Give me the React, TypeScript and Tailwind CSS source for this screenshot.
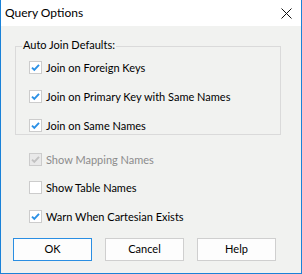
import React from "react";

function Check({ checked, disabled }: { checked: boolean; disabled?: boolean }) {
  return (
    <span
      className={
        "flex h-[13px] w-[13px] shrink-0 items-center justify-center border " +
        (disabled ? "border-[#cccccc] bg-[#e9e9e9]" : "border-[#cccccc] bg-white")
      }
    >
      {checked && (
        <svg width="11" height="11" viewBox="0 0 11 11">
          <path
            d="M2 5.6 L4.3 7.9 L9 2.8"
            fill="none"
            stroke={disabled ? "#c2c2c2" : "#2b91e6"}
            strokeWidth="1.9"
          />
        </svg>
      )}
    </span>
  );
}

function Row({ label, checked, disabled, className = "" }: { label: string; checked: boolean; disabled?: boolean; className?: string }) {
  return (
    <div className={"flex h-[15px] items-center gap-[4px] " + className}>
      <Check checked={checked} disabled={disabled} />
      <span className={"text-[11px] leading-[15px] " + (disabled ? "text-[#8c8c8c]" : "text-black")}>{label}</span>
    </div>
  );
}

function Btn({ label, primary }: { label: string; primary?: boolean }) {
  return (
    <button
      className={
        "flex h-[23px] w-[79px] items-center justify-center border bg-[#fdfdfd] text-[11px] text-black " +
        (primary ? "border-[#2a8ee2]" : "border-[#cfcfcf]")
      }
    >
      {label}
    </button>
  );
}

export default function App() {
  return (
    <div className="flex h-[274px] w-[302px] flex-col border-x border-b border-[#1a82d8] bg-[#f1f2f0] font-['Lato','Noto_Sans',sans-serif]">
      <div className="flex h-[26px] shrink-0 items-center justify-between bg-white pl-[4px]">
        <span className="text-[12px] text-black">Query Options</span>
        <svg width="11" height="11" viewBox="0 0 11 11" className="mr-[9px]">
          <path d="M0.5 0.5 L10.5 10.5 M10.5 0.5 L0.5 10.5" stroke="#111" strokeWidth="1" />
        </svg>
      </div>
      <div className="flex flex-col pl-[14px]">
        <fieldset className="mt-[11px] w-[266px] border border-[#dadada] pb-[1px] pl-[13px]">
          <legend className="ml-[-7px] px-[1px] pb-[3px] text-[11px] leading-[15px] text-black">
            Auto Join Defaults:
          </legend>
          <div className="flex flex-col gap-[14px] pt-[5px]">
            <Row label="Join on Foreign Keys" checked />
            <Row label="Join on Primary Key with Same Names" checked />
            <Row label="Join on Same Names" checked />
          </div>
        </fieldset>
        <div className="ml-[14px] mt-[17px] flex flex-col">
          <Row label="Show Mapping Names" checked disabled />
          <Row label="Show Table Names" checked={false} className="mt-[13px]" />
          <Row label="Warn When Cartesian Exists" checked className="mt-[14px]" />
        </div>
      </div>
      <div className="mt-[14px] flex gap-[13px] pl-[12px]">
        <Btn label="OK" primary />
        <Btn label="Cancel" />
        <Btn label="Help" />
      </div>
    </div>
  );
}
